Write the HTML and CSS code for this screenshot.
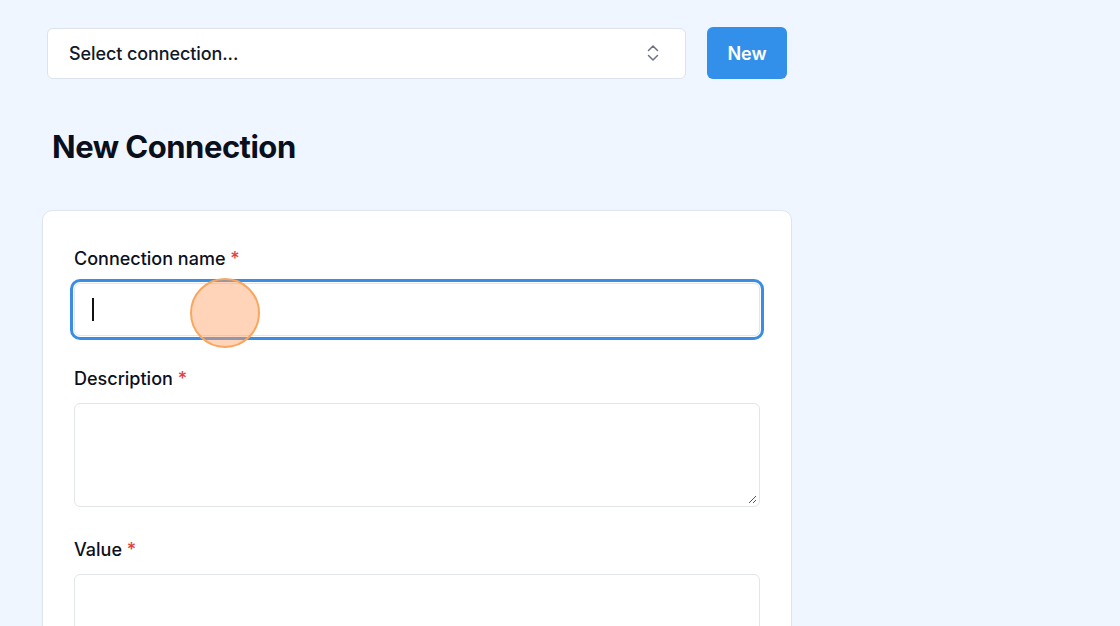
FILE: index.html
```html
<!DOCTYPE html>
<html lang="en">
<head>
<meta charset="utf-8">
<title>New Connection</title>
<link rel="stylesheet" href="styles.css">
</head>
<body>
<main class="page">
  <div class="toolbar">
    <div class="select">
      <span class="select-text">Select connection...</span>
      <svg class="chevrons" width="14" height="18" viewBox="0 0 14 18" fill="none" stroke="#6b7280" stroke-width="1.5" stroke-linecap="round" stroke-linejoin="round">
        <path d="M2.5 6.5L7 2l4.5 4.5"/>
        <path d="M2.5 11.5L7 16l4.5-4.5"/>
      </svg>
    </div>
    <button class="btn-new">New</button>
  </div>

  <h1 class="title">New Connection</h1>

  <section class="card">
    <div class="field">
      <label class="label">Connection name <span class="req">*</span></label>
      <div class="input focused"><span class="caret"></span></div>
    </div>
    <div class="field">
      <label class="label">Description <span class="req">*</span></label>
      <div class="textarea">
        <svg class="grip" width="10" height="10" viewBox="0 0 10 10" stroke="#555" stroke-width="1">
          <path d="M9 2L2 9"/>
          <path d="M9 6L6 9"/>
        </svg>
      </div>
    </div>
    <div class="field">
      <label class="label">Value <span class="req">*</span></label>
      <div class="textarea"></div>
    </div>
  </section>
</main>
<div class="click-dot"></div>
</body>
</html>
```

FILE: styles.css
```css
* { box-sizing: border-box; }
html, body { margin: 0; height: 100%; overflow: hidden; }
body {
  background: #f0f6ff;
  font-family: Inter, "Liberation Sans", sans-serif;
  color: #0b1020;
}
.page {
  padding: 27px 0 0 42px;
  width: 792px;
  height: 626px;
  overflow: hidden;
}
.toolbar {
  display: flex;
  align-items: center;
  gap: 21px;
  margin-left: 5px;
}
.select {
  width: 639px;
  height: 51px;
  background: #fff;
  border: 1px solid #dce3ec;
  border-radius: 6px;
  display: flex;
  align-items: center;
  justify-content: space-between;
  padding: 0 25px 0 21px;
}
.select-text {
  font-size: 18px;
  font-weight: 500;
  color: #111827;
  letter-spacing: -0.1px;
}
.chevrons { display: block; }
.btn-new {
  width: 80px;
  height: 52px;
  border: none;
  border-radius: 6px;
  background: #3290ea;
  color: #fff;
  font-family: inherit;
  font-size: 18px;
  font-weight: 600;
}
.title {
  margin: 48px 0 0 10px;
  font-size: 31px;
  line-height: 40px;
  font-weight: 700;
  letter-spacing: -0.5px;
  color: #0a0f1d;
}
.card {
  margin-top: 43px;
  width: 750px;
  height: 560px;
  background: #fff;
  border: 1px solid #dfe5ee;
  border-radius: 10px;
  padding: 36px 31px 0 31px;
  display: flex;
  flex-direction: column;
  gap: 31px;
}
.field { display: flex; flex-direction: column; }
.label {
  font-size: 18px;
  line-height: 24px;
  font-weight: 500;
  margin-bottom: 12px;
  color: #0b1020;
}
.req { color: #e53e3e; }
.input {
  height: 53px;
  border: 1px solid #e2e5ea;
  border-radius: 6px;
  background: #fff;
  display: flex;
  align-items: center;
  padding-left: 17px;
}
.input.focused {
  box-shadow: 0 0 0 1px #fff, 0 0 0 4px #3b8de4;
}
.caret {
  width: 2px;
  height: 23px;
  background: #111;
}
.textarea {
  height: 104px;
  border: 1px solid #e2e5ea;
  border-radius: 6px;
  background: #fff;
  position: relative;
}
.grip {
  position: absolute;
  right: 2px;
  bottom: 2px;
}
.click-dot {
  position: absolute;
  left: 190px;
  top: 278px;
  width: 70px;
  height: 70px;
  border-radius: 50%;
  background: rgba(255, 160, 100, 0.45);
  border: 2.5px solid #f8a760;
}
```
